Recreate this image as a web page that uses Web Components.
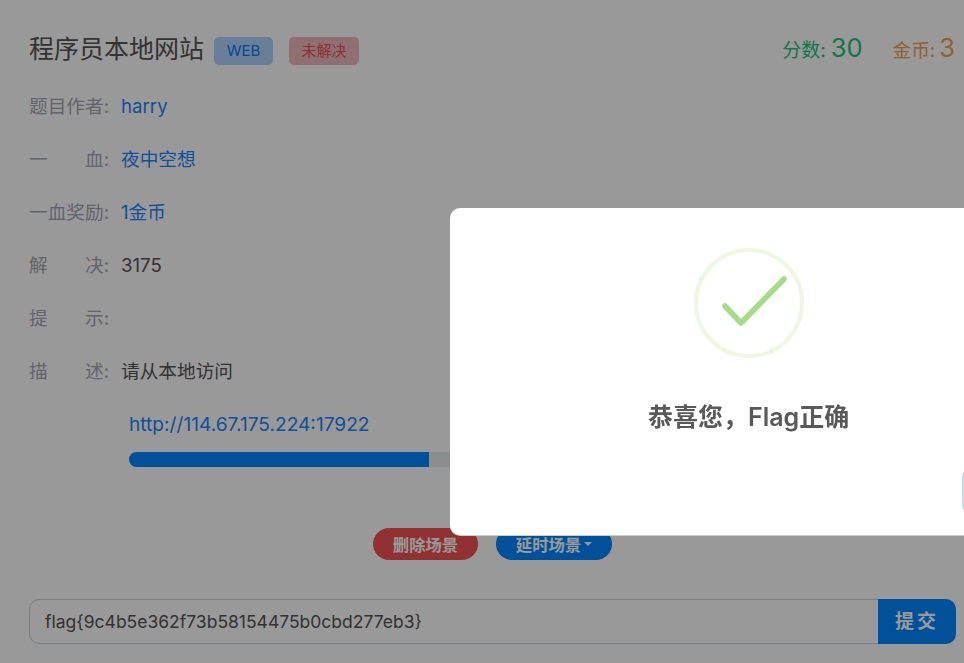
<!DOCTYPE html>
<html lang="zh-CN">
<head>
<meta charset="UTF-8">
<title>程序员本地网站</title>
<style>
  html, body { margin: 0; height: 100%; }
  body {
    background: #fff;
    color: #555;
    font-family: Inter, "Noto Sans CJK SC", sans-serif;
    overflow: hidden;
  }
</style>
</head>
<body>
<challenge-page></challenge-page>
<success-dialog></success-dialog>

<template id="pageTpl">
  <style>
    :host { display: block; padding: 30px 8px 0 29px; height: 663px; box-sizing: border-box; }
    .head { display: flex; align-items: center; height: 38px; }
    h1 { margin: 0; font-size: 25px; font-weight: 400; line-height: 38px; color: #555; }
    .tag { font-size: 15px; height: 28px; line-height: 28px; border-radius: 5px; text-align: center; margin-top: 4px; }
    .web { width: 59px; margin-left: 10px; background: #aed3ff; color: #0f78f0; }
    .todo { width: 70px; margin-left: 16px; background: #efb9bc; color: #e8535c; }
    .score { margin-left: auto; display: flex; align-items: baseline; font-size: 18.67px; padding: 0 1px 3px 0; }
    .score b { font-weight: 400; font-size: 25.5px; margin-left: 5px; }
    .green { color: #25c47e; font-size: 19px; }
    .orange { color: #f0a050; margin-left: 30px; }
    .orange b { margin-left: 4px; }
    .rows { margin-top: 25px; }
    info-row { height: 53px; }
    .blue { color: #2185ff; }
    .scene { margin: 0 0 0 100px; }
    .scene a { display: block; color: #2185ff; font-size: 19.15px; line-height: 27px; height: 27px; }
    .bar { margin-top: 14px; width: 600px; height: 15px; background: #e9ecef; border-radius: 8px; overflow: hidden; }
    .bar i { display: block; width: 300px; height: 100%; background: #0088ff; }
    .actions { display: flex; justify-content: center; gap: 18px; margin-top: 61px; }
    .pill { height: 32px; border-radius: 16px; color: #fff; font-size: 16.33px; font-weight: 700; display: flex; align-items: center; justify-content: center; }
    .del { width: 105px; background: #f25353; }
    .delay { width: 116px; background: #0088ff; }
    .caret { margin-left: 3px; width: 0; height: 0; border: 4px solid transparent; border-top-color: #fff; border-bottom: 0; }
    .flag { display: flex; margin-top: 39px; height: 45px; }
    .flag .val { flex: 1; border: 1px solid #ced4da; border-right: 0; border-radius: 10px 0 0 10px; padding: 0 15px; line-height: 43px; font-size: 17.5px; color: #555; }
    .flag .send { width: 78px; background: #0088ff; color: #fff; border-radius: 0 10px 10px 0; font-size: 19px; font-weight: 700; letter-spacing: 3px; text-align: center; line-height: 45px; }
  </style>
  <div class="head">
    <h1>程序员本地网站</h1>
    <span class="tag web">WEB</span>
    <span class="tag todo">未解决</span>
    <div class="score">
      <span class="green">分数:<b>30</b></span>
      <span class="orange">金币:<b>3</b></span>
    </div>
  </div>
  <div class="rows">
    <info-row><span slot="label">题目作者:</span><span class="blue">harry</span></info-row>
    <info-row spread><span slot="label"><span>一</span><span>血:</span></span><span class="blue">夜中空想</span></info-row>
    <info-row><span slot="label">一血奖励:</span><span class="blue">1金币</span></info-row>
    <info-row spread><span slot="label"><span>解</span><span>决:</span></span>3175</info-row>
    <info-row spread><span slot="label"><span>提</span><span>示:</span></span></info-row>
    <info-row spread><span slot="label"><span>描</span><span>述:</span></span>请从本地访问</info-row>
  </div>
  <div class="scene">
    <a>http://114.67.175.224:17922</a>
    <div class="bar"><i></i></div>
  </div>
  <div class="actions">
    <div class="pill del">删除场景</div>
    <div class="pill delay">延时场景<span class="caret"></span></div>
  </div>
  <div class="flag">
    <div class="val">flag{9c4b5e362f73b58154475b0cbd277eb3}</div>
    <div class="send">提交</div>
  </div>
</template>

<template id="rowTpl">
  <style>
    :host { display: flex; font-size: 18.67px; line-height: 27px; color: #555; }
    .label { width: 80px; margin-right: 12px; color: #a5a5b5; white-space: nowrap; }
    :host([spread]) ::slotted([slot="label"]) { display: flex; justify-content: space-between; }
  </style>
  <div class="label"><slot name="label"></slot></div>
  <div><slot></slot></div>
</template>

<template id="dialogTpl">
  <style>
    :host { position: fixed; inset: 0; background: rgba(0,0,0,.4); display: block; }
    .box { position: absolute; left: 450px; top: 208px; width: 598px; height: 327px; background: #fff; border-radius: 10px; box-shadow: 0 1px 0 #ccc; font-family: Inter, "Noto Sans CJK SC", sans-serif; }
    svg { position: absolute; left: 244px; top: 40px; }
    h2 { position: absolute; left: 0; top: 193px; margin: 0; font-size: 25px; line-height: 32px; font-weight: 600; color: #595959; width: 598px; padding-left: 198px; box-sizing: border-box; }
    .ok { position: absolute; left: 512px; top: 264px; width: 80px; height: 38px; background: #c6dbee; border-radius: 4px; }
  </style>
  <div class="box">
    <svg width="110" height="110" viewBox="0 0 110 110" fill="none">
      <circle cx="55" cy="55" r="53" stroke="#edf7e4" stroke-width="4"/>
      <path d="M5 30.500 L8 32 M76 102 L78 105" stroke="#d9eccb" stroke-width="1"/>
      <path d="M31 58 L47 75 L90 31" stroke="#a5dc86" stroke-width="5.500" stroke-linecap="round" stroke-linejoin="round"/>
    </svg>
    <h2>恭喜您，Flag正确</h2>
    <div class="ok"></div>
  </div>
</template>

<script>
  class ChallengePage extends HTMLElement {
    constructor() {
      super();
      var tpl = document.getElementById('pageTpl');
      this.attachShadow({mode: 'open'}).appendChild(tpl.content.cloneNode(true));
    }
  }
  class InfoRow extends HTMLElement {
    constructor() {
      super();
      var tpl = document.getElementById('rowTpl');
      this.attachShadow({mode: 'open'}).appendChild(tpl.content.cloneNode(true));
    }
  }
  class SuccessDialog extends HTMLElement {
    constructor() {
      super();
      var tpl = document.getElementById('dialogTpl');
      this.attachShadow({mode: 'open'}).appendChild(tpl.content.cloneNode(true));
    }
  }
  customElements.define('info-row', InfoRow);
  customElements.define('challenge-page', ChallengePage);
  customElements.define('success-dialog', SuccessDialog);
</script>
</body>
</html>
